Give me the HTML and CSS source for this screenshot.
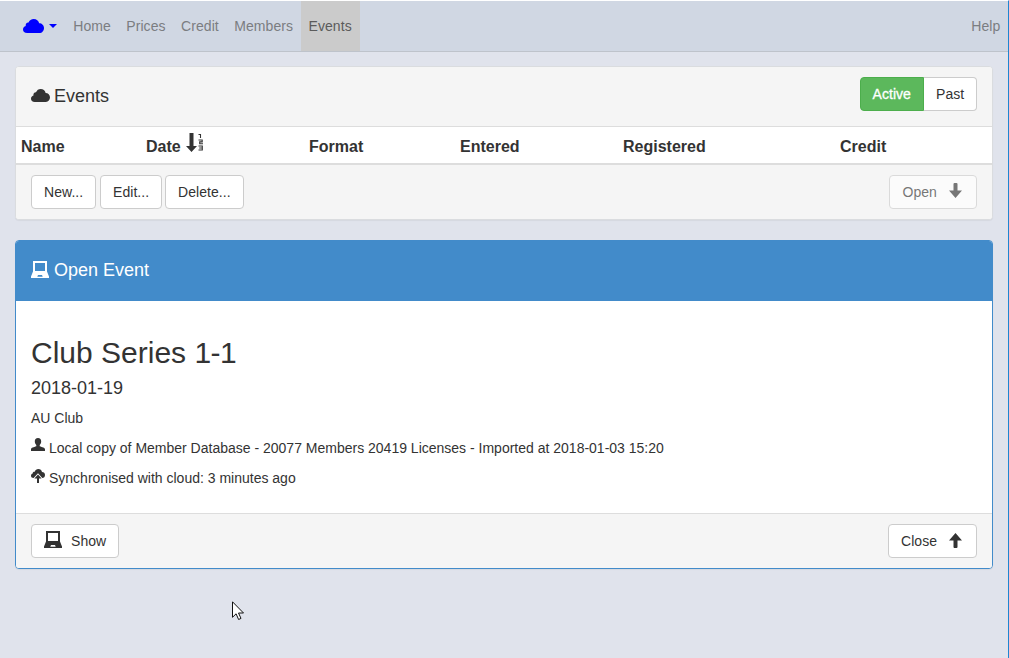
FILE: index.html
```html
<!DOCTYPE html>
<html lang="en">
<head>
<meta charset="utf-8">
<title>Events</title>
<link rel="stylesheet" href="styles.css">
</head>
<body>
<svg class="defs" width="0" height="0" aria-hidden="true">
  <symbol id="cloud" viewBox="0 0 20 14" preserveAspectRatio="none"><path d="M4 14C1.400 14 0 12.600 0 10.500 0 8.700 1 7.500 2.600 7 2.200 5.300 3.400 3.500 5.300 3.600 6.100 1.300 8 0 10.200 0c2.600 0 4.700 1.700 5.200 4.200C18 4.200 20 6.300 20 9c0 2.900-1.800 5-4.300 5z"/></symbol>
  <symbol id="laptop" viewBox="0 0 18 17"><path fill-rule="evenodd" d="M2 0h14v10.500l2 5V17H0v-1.500l2-5zM4 2v8h10V2zM7 14l-.7 1.700h5.400L11 14z"/></symbol>
  <symbol id="arrow" viewBox="0 0 13 15"><path d="M4.500 1Q4.500 0 5.500 0h2q1 0 1 1v6.500H13L6.500 15 0 7.500h4.500z"/></symbol>
</svg>
<nav class="navbar">
  <a class="brand"><svg class="brand-cloud"><use href="#cloud"/></svg><span class="caret"></span></a>
  <a class="link">Home</a>
  <a class="link">Prices</a>
  <a class="link">Credit</a>
  <a class="link">Members</a>
  <a class="link active">Events</a>
  <a class="link help">Help</a>
</nav>
<main>
  <section class="panel">
    <header class="heading">
      <h3><svg class="head-cloud"><use href="#cloud"/></svg>Events</h3>
      <div class="group"><button class="btn success">Active</button><button class="btn past">Past</button></div>
    </header>
    <div class="columns">
      <span>Name</span>
      <span class="date">Date<svg class="sort" viewBox="0 0 18 19"><path d="M3.500 0h4v13H11l-5.500 6L0 13h3.500z"/><path class="digits" d="M12.500 1.500h2v3.500M12.500 7h3.700v1.900h-2.500v1.800h3.300M12.500 13h3.800v4h-3.800M13.200 15h3"/></svg></span>
      <span>Format</span><span>Entered</span><span>Registered</span><span>Credit</span>
    </div>
    <footer class="footer">
      <button class="btn new">New...</button><button class="btn edit">Edit...</button><button class="btn delete">Delete...</button>
      <button class="btn open end" disabled>Open<svg class="arrow"><use href="#arrow"/></svg></button>
    </footer>
  </section>
  <section class="panel primary">
    <header class="heading"><h3><svg class="laptop"><use href="#laptop"/></svg>Open Event</h3></header>
    <div class="body">
      <h2>Club Series <span class="number">1-1</span></h2>
      <h4>2018-01-19</h4>
      <p>AU Club</p>
      <p class="member"><svg class="small-icon" viewBox="0 0 14 13"><path d="M7 0C9.200 0 10.200 1.300 10.200 3.300 10.200 5 9.500 6.400 8.700 7v1.200c2.500 1 5.300 1.300 5.300 3.100V13H0v-1.700C0 9.500 2.800 9.200 5.300 8.200V7C4.500 6.400 3.800 5 3.800 3.300 3.800 1.300 4.800 0 7 0z"/></svg>Local copy of Member Database - 20077 Members 20419 Licenses - Imported at 2018-01-03 15:20</p>
      <p class="sync"><svg class="small-icon sync-icon" viewBox="0 0 14 14"><path d="M2.600 9C1 9 0 8.200 0 6.800c0-1.200.7-2 1.700-2.300C1.600 3.200 2.600 2.500 3.700 2.700 4.300 1 5.700 0 7.300 0c2 0 3.400 1.300 3.700 3 1.800 0 3 1.300 3 3.100C14 7.900 12.900 9 11.300 9L7 4.300z"/><path d="M7 5.600l3.600 4H8V14H6V9.600H3.400z"/></svg>Synchronised with cloud: 3 minutes ago</p>
    </div>
    <footer class="footer">
      <button class="btn show"><svg class="laptop"><use href="#laptop"/></svg>Show</button>
      <button class="btn close end">Close<svg class="arrow up"><use href="#arrow"/></svg></button>
    </footer>
  </section>
</main>
<svg class="cursor" viewBox="0 0 12 19"><path d="M.5.8v15.500l3.600-3.500 2.500 5.700 2.400-1.100-2.500-5.400h5z"/></svg>
</body>
</html>
```
FILE: styles.css
```css
* { box-sizing: border-box; }
body {
  margin: 0;
  height: 658px;
  overflow: hidden;
  border-top: 1px solid #fff;
  border-right: 1px solid #1e86d2;
  background: #e0e3ec;
  color: #333;
  font: 14px/20px "Liberation Sans", Arial, sans-serif;
}
svg { fill: currentColor; flex: none; }
.defs { position: absolute; }
.navbar {
  display: flex;
  height: 51px;
  padding-left: 15px;
  background: #d0d7e3;
  border-bottom: 1px solid #bec3cb;
}
.brand { display: flex; align-items: center; width: 50.500px; padding-left: 8px; color: #00f; }
.brand-cloud { width: 21px; height: 14px; margin-right: 5px; }
.caret { border: 4px solid transparent; border-top-color: #00f; border-bottom: 0; }
.link { padding: 15px 7.700px; color: #7b7d81; letter-spacing: .08px; }
.active { width: 59px; padding-right: 0; background: #cbcbcb; color: #5b5b5b; }
.help { margin-left: auto; }
main { padding: 14px 15px 0; }
.panel {
  height: 154px;
  margin-bottom: 20px;
  border: 1px solid #dadcdf;
  border-radius: 4px;
  background: #fff;
  box-shadow: 0 1px 1px rgba(0,0,0,.05);
  overflow: hidden;
}
.heading {
  display: flex;
  align-items: center;
  justify-content: space-between;
  height: 60px;
  padding: 0 15px;
  background: #f5f5f5;
  border-bottom: 1px solid #ddd;
}
h2, h3, h4 { margin: 0; font-weight: 400; }
h3 { display: flex; align-items: center; margin-bottom: 2px; font-size: 18px; line-height: 20px; }
.head-cloud { width: 19px; height: 13px; margin-right: 4px; }
.group { display: flex; margin-bottom: 5px; }
.btn {
  display: flex;
  align-items: center;
  height: 34px;
  padding: 0 12px;
  border: 1px solid #ccc;
  border-radius: 4px;
  background: #fff;
  color: #333;
  font: 14px/20px "Liberation Sans", Arial, sans-serif;
  letter-spacing: .05px;
}
.success { width: 64px; padding-left: 11.500px; background: #5cb85c; border-color: #4cae4c; color: #fff; border-radius: 4px 0 0 4px; -webkit-text-stroke: .3px #fff; }
.past { width: 53px; border-left: 0; border-radius: 0 4px 4px 0; }
.columns {
  display: grid;
  grid-template-columns: 125px 163px 151px 163px 217px 1fr;
  height: 38px;
  padding: 10px 0 0 5px;
  border-bottom: 2px solid #ddd;
  font-size: 16px;
  font-weight: 700;
}
.date { display: flex; }
.sort { width: 18px; height: 19px; margin: -4px 0 0 5px; }
.digits { fill: none; stroke: currentColor; stroke-width: 1.100; }
.footer { display: flex; height: 55px; padding: 10px 15px; gap: 4px; background: #f5f5f5; }
.new { width: 65px; }
.edit { width: 62px; }
.delete { width: 79px; margin-left: -1px; }
.end { margin-left: auto; }
.open { width: 88px; padding-left: 12.500px; opacity: .65; }
.close { width: 89px; }
.arrow { width: 13px; height: 15px; margin-left: 12px; margin-top: -3px; }
.up { transform: rotate(180deg); margin: -1px 0 0 11.500px; }
.primary { height: 329px; border-color: #428bca; }
.primary .heading { background: #428bca; border-color: #428bca; color: #fff; }
.laptop { width: 18px; height: 17px; margin-right: 5px; }
.body { height: 212px; padding: 35px 15px 0; }
h2 { font-size: 30px; line-height: 33px; }
.number { letter-spacing: -.6px; }
h4 { margin-top: 9px; font-size: 18px; line-height: 20px; }
p { display: flex; margin: 10px 0 0; }
.small-icon { width: 14px; height: 13px; margin: 0 4px 0 0; }
.sync-icon { height: 14px; margin-top: 1px; }
.primary .footer { border-top: 1px solid #ddd; height: 56px; }
.show { width: 88px; }
.show .laptop { margin-right: 9px; margin-top: -3px; }
.cursor { position: absolute; left: 232px; top: 601px; width: 12px; height: 19px; fill: #fff; stroke: #111; }
```
